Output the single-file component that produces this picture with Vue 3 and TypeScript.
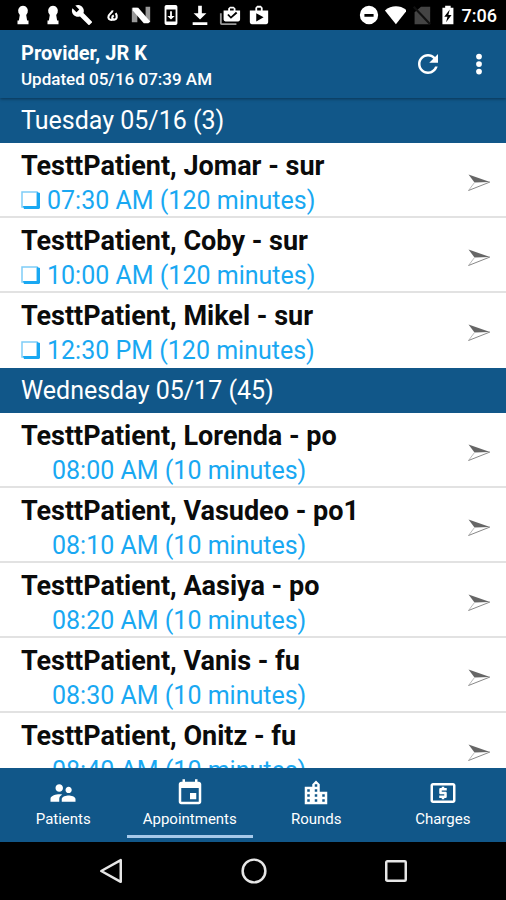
<script setup lang="ts">
import { ref } from 'vue'

interface Appointment {
  name: string
  time: string
  open?: boolean
}

interface Day {
  label: string
  items: Appointment[]
}

const days: Day[] = [
  {
    label: 'Tuesday 05/16 (3)',
    items: [
      { name: 'TesttPatient, Jomar - sur', time: '07:30 AM (120 minutes)', open: true },
      { name: 'TesttPatient, Coby - sur', time: '10:00 AM (120 minutes)', open: true },
      { name: 'TesttPatient, Mikel - sur', time: '12:30 PM (120 minutes)', open: true },
    ],
  },
  {
    label: 'Wednesday 05/17 (45)',
    items: [
      { name: 'TesttPatient, Lorenda - po', time: '08:00 AM (10 minutes)' },
      { name: 'TesttPatient, Vasudeo - po1', time: '08:10 AM (10 minutes)' },
      { name: 'TesttPatient, Aasiya - po', time: '08:20 AM (10 minutes)' },
      { name: 'TesttPatient, Vanis - fu', time: '08:30 AM (10 minutes)' },
      { name: 'TesttPatient, Onitz - fu', time: '08:40 AM (10 minutes)' },
    ],
  },
]

const tabs = [
  {
    label: 'Patients',
    icon: 'M16.5 12c1.38 0 2.49-1.12 2.49-2.5S17.88 7 16.5 7C15.12 7 14 8.12 14 9.5s1.12 2.5 2.5 2.5zM9 11c1.66 0 2.99-1.34 2.99-3S10.66 5 9 5C7.34 5 6 6.34 6 8s1.34 3 3 3zm7.5 3c-1.83 0-5.5.92-5.5 2.75V19h11v-2.25c0-1.83-3.67-2.75-5.5-2.75zM9 13c-2.33 0-7 1.17-7 3.5V19h7v-2.25c0-.85.33-2.34 2.37-3.47C10.5 13.1 9.66 13 9 13z',
  },
  {
    label: 'Appointments',
    icon: 'M17 12h-5v5h5v-5zM16 1v2H8V1H6v2H5c-1.11 0-1.99.9-1.99 2L3 19c0 1.1.89 2 2 2h14c1.1 0 2-.9 2-2V5c0-1.1-.9-2-2-2h-1V1h-2zm3 18H5V8h14v11z',
  },
  {
    label: 'Rounds',
    icon: 'M15 11V5l-3-3-3 3v2H3v14h18V11h-6zm-8 8H5v-2h2v2zm0-4H5v-2h2v2zm0-4H5V9h2v2zm6 8h-2v-2h2v2zm0-4h-2v-2h2v2zm0-4h-2V9h2v2zm0-4h-2V5h2v2zm6 12h-2v-2h2v2zm0-4h-2v-2h2v2z',
  },
  {
    label: 'Charges',
    icon: 'M11 17h2v-1h1c.55 0 1-.45 1-1v-3c0-.55-.45-1-1-1h-3v-1h4V8h-2V7h-2v1h-1c-.55 0-1 .45-1 1v3c0 .55.45 1 1 1h3v1H9v2h2v1zm9-13H4c-1.11 0-1.99.89-1.99 2L2 18c0 1.11.89 2 2 2h16c1.11 0 2-.89 2-2V6c0-1.11-.89-2-2-2zm0 14H4V6h16v12z',
  },
]

const active = ref('Appointments')
</script>

<template>
  <div class="screen">
    <div class="status">
      <div class="notifications">
        <svg v-for="n in 2" :key="n" viewBox="0 0 24 24"><path d="M12 2a5.500 5.500 0 0 1 5 7.500L15.500 12l1 6H18v4H6v-4h1.500l1-6L7 9.500A5.500 5.500 0 0 1 12 2z" /></svg>
        <svg viewBox="0 0 24 24"><path d="M22.700 19l-9.100-9.100c.9-2.300.4-5-1.500-6.900-2-2-5-2.400-7.400-1.300L9 6 6 9 1.600 4.700C.4 7.100.9 10.100 2.900 12.100c1.900 1.900 4.600 2.400 6.900 1.500l9.100 9.100c.4.4 1 .4 1.400 0l2.300-2.300c.5-.4.5-1.100.1-1.400z" /></svg>
        <svg viewBox="0 0 24 24"><path class="line" d="M12.500 7c.5 2.500-5 4-4.500 7.500.4 2.500 3 3.500 5 2.500M16 10c2 3 1.500 7-1.500 7s-3-3.500-.5-4.500" /></svg>
        <svg viewBox="0 0 24 24"><path class="grey" d="M2 4h6v16H2zM17 3h5v17h-5z" /><path d="M3 4h6l13 15-2 2h-5L3 7z" /></svg>
        <svg viewBox="0 0 24 24"><path fill-rule="evenodd" d="M7 1h10a2 2 0 0 1 2 2v18a2 2 0 0 1-2 2H7a2 2 0 0 1-2-2V3a2 2 0 0 1 2-2zm0 5v13h10V6zm4 2h2v5h3l-4 4-4-4h3z" /></svg>
        <svg viewBox="0 0 24 24"><path d="M10 2h4v8h5l-7 7-7-7h5zM4 20h16v3H4z" /></svg>
        <svg viewBox="0 0 24 24"><path class="grey" d="M1 10h2v11h16v2H3a2 2 0 0 1-2-2z" /><path fill-rule="evenodd" d="M5 7h5V5l2-2h4l2 2v2h5v10a2 2 0 0 1-2 2H7a2 2 0 0 1-2-2zm7 0h4V5h-4zm-3 5 4 4 7-6-1.500-1.500-5.500 5-2.500-2.500z" /></svg>
        <svg viewBox="0 0 24 24"><path fill-rule="evenodd" d="M2 7h6V4l2-2h4l2 2v3h6v13a2 2 0 0 1-2 2H4a2 2 0 0 1-2-2zm8 0h4V4h-4zm-1 3v9l8-4.500z" /></svg>
      </div>
      <div class="system">
        <svg viewBox="0 0 24 24"><path fill-rule="evenodd" d="M12 2a10 10 0 1 0 0 20 10 10 0 0 0 0-20zM7 11h10v3H7z" /></svg>
        <svg viewBox="0 0 24 24"><path d="M1 7c7-6 17-6 24 0L13 22z" /></svg>
        <svg viewBox="0 0 24 24"><path class="dim" d="M12 3h10v19H5V9z" /><path class="line slash" d="M4 3l18 19" /></svg>
        <svg viewBox="0 0 24 24"><path fill-rule="evenodd" d="M10 2h6v2h3v18H7V4h3zm5 4-6 8h3.500L11 20l6-8h-3.500z" /></svg>
        <span class="clock">7:06</span>
      </div>
    </div>

    <header class="bar">
      <div class="who">
        <h1>Provider, JR K</h1>
        <p>Updated 05/16 07:39 AM</p>
      </div>
      <button type="button" aria-label="Refresh">
        <svg viewBox="0 0 24 24"><path d="M17.650 6.350C16.200 4.900 14.210 4 12 4c-4.420 0-7.990 3.580-7.990 8s3.570 8 7.990 8c3.730 0 6.840-2.550 7.730-6h-2.080c-.82 2.330-3.040 4-5.650 4-3.310 0-6-2.690-6-6s2.690-6 6-6c1.660 0 3.140.69 4.220 1.780L13 11h7V4l-2.350 2.350z" /></svg>
      </button>
      <button type="button" aria-label="More options">
        <svg viewBox="0 0 24 24"><circle cx="12" cy="6" r="2.300" /><circle cx="12" cy="12" r="2.300" /><circle cx="12" cy="18" r="2.300" /></svg>
      </button>
    </header>

    <main class="list">
      <section v-for="day in days" :key="day.label">
        <h2>{{ day.label }}</h2>
        <ul>
          <li v-for="item in day.items" :key="item.name">
            <div class="info">
              <h3>{{ item.name }}</h3>
              <p :class="{ plain: !item.open }">
                <svg v-if="item.open" viewBox="0 0 20 20">
                  <path class="face" d="M1 2h15v15H1z" />
                  <path d="M16 2l3 1v15l-1 1H3l-1-3h14z" />
                </svg>
                <span>{{ item.time }}</span>
              </p>
            </div>
            <svg class="send" viewBox="0 0 24 20">
              <path class="wing" d="M1.500 1.500L23 9 7.500 9.500z" />
              <path class="edge" d="M7.500 9.500l-6 8" />
              <path class="edge low" d="M1.500 17.500L23 9" />
            </svg>
          </li>
        </ul>
      </section>
    </main>

    <nav class="tabs">
      <button
        v-for="tab in tabs"
        :key="tab.label"
        type="button"
        :class="{ active: tab.label === active }"
        @click="active = tab.label"
      >
        <svg viewBox="0 0 24 24"><path :d="tab.icon" /></svg>
        <span>{{ tab.label }}</span>
      </button>
    </nav>

    <div class="keys">
      <button type="button" aria-label="Back"><svg viewBox="0 0 24 24"><path class="line" d="M21 2v20L3 12z" /></svg></button>
      <button type="button" aria-label="Home"><svg viewBox="0 0 24 24"><circle class="line" cx="12" cy="12" r="10.500" /></svg></button>
      <button type="button" aria-label="Recent apps"><svg viewBox="0 0 24 24"><rect class="line" x="3" y="3" width="18" height="18" rx="1" /></svg></button>
    </div>
  </div>
</template>

<style>
body {
  margin: 0;
}
</style>

<style scoped>
.screen {
  display: flex;
  flex-direction: column;
  height: 100vh;
  overflow: hidden;
  background: #fff;
  color: #fff;
  font-family: Roboto, "Liberation Sans", sans-serif;
}

h1, h2, h3, p, ul {
  margin: 0;
  padding: 0;
}

svg {
  display: block;
  flex: none;
  fill: currentColor;
}

button {
  display: flex;
  align-items: center;
  justify-content: center;
  padding: 0;
  border: 0;
  background: none;
  color: inherit;
  font: inherit;
  cursor: pointer;
}

.line {
  fill: none;
  stroke: currentColor;
  stroke-width: 2.3;
  stroke-linejoin: round;
}

.status {
  display: flex;
  flex: none;
  align-items: center;
  justify-content: space-between;
  height: 30px;
  padding: 0 9px 0 12px;
  box-sizing: border-box;
  background: #000;
}

.status svg {
  width: 22px;
  height: 22px;
}

.notifications {
  display: flex;
  justify-content: space-between;
  width: 258px;
}

.grey {
  fill: #999;
}

.dim {
  fill: #444;
}

.slash {
  stroke: #111;
}

.system {
  display: flex;
  align-items: center;
  gap: 4px;
}

.clock {
  font-size: 18px;
  font-weight: 500;
  line-height: 22px;
  padding-top: 2px;
}

.bar {
  position: relative;
  display: flex;
  flex: none;
  align-items: center;
  height: 68px;
  padding: 0 12px 0 21px;
  box-sizing: border-box;
  background: #115789;
  box-shadow: 0 1px 3px rgba(0, 0, 0, 0.4);
}

.who {
  flex: 1;
  padding-top: 4px;
}

.who h1 {
  font-size: 20px;
  font-weight: 700;
  line-height: 26px;
}

.who p {
  font-size: 17px;
  font-weight: 500;
  line-height: 26px;
}

.bar button {
  width: 30px;
  height: 48px;
  margin-left: 21px;
}

.bar svg {
  width: 30px;
  height: 30px;
}

.list {
  flex: 1;
  min-height: 0;
  overflow: hidden;
}

h2 {
  padding-left: 21px;
  background: #115789;
  font-size: 25px;
  font-weight: 400;
  line-height: 45px;
}

ul {
  list-style: none;
}

li {
  display: flex;
  align-items: center;
  height: 75px;
  padding: 7px 15px 0 21px;
  box-sizing: border-box;
  border-bottom: 2px solid #e2e2e2;
}

li:last-child {
  border-bottom-color: transparent;
}

.info {
  flex: 1;
}

h3 {
  color: #0b0b0b;
  font-size: 27px;
  font-weight: 700;
  line-height: 34px;
}

.info p {
  display: flex;
  align-items: center;
  gap: 6px;
  color: #19a8f2;
  font-size: 25px;
  line-height: 35px;
}

.info p.plain {
  padding-left: 31px;
}

.info svg {
  width: 20px;
  height: 20px;
}

.face {
  fill: #fff;
  stroke: #7fcdf7;
  stroke-width: 1.5;
}

.send {
  width: 24px;
  height: 20px;
}

.wing {
  fill: #666;
}

.edge {
  fill: none;
  stroke: #bbb;
  stroke-width: 1;
}

.low {
  stroke: #888;
}

.tabs {
  display: flex;
  flex: none;
  height: 74px;
  background: #115789;
}

.tabs button {
  flex: 1;
  flex-direction: column;
  justify-content: flex-start;
  gap: 1px;
  height: 70px;
  padding-top: 10px;
  border-bottom: 3px solid transparent;
  box-sizing: border-box;
}

.tabs button.active {
  border-bottom-color: #a6c9ea;
}

.tabs svg {
  width: 30px;
  height: 30px;
}

.tabs span {
  font-size: 15px;
  font-weight: 400;
  line-height: 20px;
}

.keys {
  display: flex;
  flex: none;
  align-items: center;
  justify-content: space-between;
  height: 58px;
  padding: 0 97px 0 98px;
  background: #000;
  color: #e6e6e6;
}

.keys svg {
  width: 26px;
  height: 26px;
}
</style>
